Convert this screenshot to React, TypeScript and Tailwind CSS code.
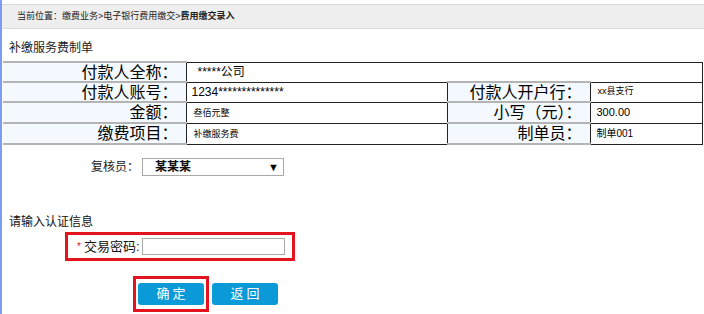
import React from 'react';

const font = { fontFamily: '"Liberation Sans", "Noto Sans CJK SC", sans-serif' };

interface RowProps {
  label: string;
  value: string;
  valueClass?: string;
  label2?: string;
  value2?: string;
  value2Class?: string;
}

const labelTd = 'bg-[#f3f9fe] border-y-2 border-[#b4b4b4] border-r border-r-[#222] text-right pr-[8px] text-[16px] leading-[17px] text-black';
const valueTd = 'border-y border-[#222] border-r border-r-[#222] text-black align-middle';

const InfoRow: React.FC<RowProps> = ({ label, value, valueClass, label2, value2, value2Class }) => (
  <tr className="h-[20px]">
    <td className={`${labelTd} w-[183px]`}>{label}</td>
    {label2 ? (
      <>
        <td className={`${valueTd} w-[261px] ${valueClass ?? ''}`}>{value}</td>
        <td className={`${labelTd} w-[143px]`}>{label2}</td>
        <td className={`${valueTd} ${value2Class ?? ''}`}>{value2}</td>
      </>
    ) : (
      <td colSpan={3} className={`${valueTd} ${valueClass ?? ''}`}>{value}</td>
    )}
  </tr>
);

const App: React.FC = () => {
  return (
    <div className="w-[704px] h-[314px] bg-white border-l-2 border-[#7b9cf0] overflow-hidden" style={font}>
      {/* Breadcrumb */}
      <div className="pt-[4px]">
        <div className="h-[25px] bg-[#eeeeee] border-y border-[#dadada] flex items-center pl-[15px] text-[9px] text-[#222]">
          <span>当前位置：缴费业务&gt;电子银行费用缴交&gt;</span>
          <span className="font-bold">费用缴交录入</span>
        </div>
      </div>

      <div className="pl-[7px] pt-[11px] h-[32px] text-[12px] leading-[16px] text-[#222]">补缴服务费制单</div>

      {/* Info table */}
      <table className="ml-[1px] w-[700px] border-collapse">
        <tbody>
          <InfoRow label="付款人全称：" value="*****公司" valueClass="text-[12px] pl-[11px]" />
          <InfoRow
            label="付款人账号："
            value="1234**************"
            valueClass="text-[12px] pl-[5px]"
            label2="付款人开户行："
            value2="xx县支行"
            value2Class="text-[9px] pl-[7px]"
          />
          <InfoRow
            label="金额："
            value="叁佰元整"
            valueClass="text-[9px] leading-[20px] pl-[7px]"
            label2="小写（元）："
            value2="300.00"
            value2Class="text-[11px] pl-[6px]"
          />
          <InfoRow
            label="缴费项目："
            value="补缴服务费"
            valueClass="text-[9px] leading-[20px] pl-[7px]"
            label2="制单员："
            value2="制单001"
            value2Class="text-[10px] pl-[6px]"
          />
        </tbody>
      </table>

      {/* Reviewer */}
      <div className="mt-[13px] flex items-center h-[18px]">
        <span className="ml-[89px] w-[51px] text-[12px] text-[#222]">复核员：</span>
        <div className="w-[142px] h-[18px] border border-[#a9a9a9] flex items-center justify-between pl-[12px] pr-[4px]">
          <span className="text-[12px] font-semibold text-[#111]">某某某</span>
          <span className="text-[11px] text-black">▼</span>
        </div>
      </div>

      <div className="mt-[39px] pl-[7px] text-[12px] leading-[14px] text-[#111]">请输入认证信息</div>

      {/* Auth */}
      <div className="mt-[3px] ml-[63px] w-[230px] h-[29px] border-[3px] border-[#e3141d] flex items-center">
        <span className="ml-[9px] text-[#e3141d] text-[10px]">*</span>
        <span className="ml-[3px] text-[13px] text-[#111]">交易密码:</span>
        <input type="password" className="ml-[2px] w-[143px] h-[17px] border border-[#a9a9a9] outline-none" />
      </div>

      {/* Buttons */}
      <div className="mt-[15px] flex items-center">
        <div className="ml-[131px] w-[76px] h-[36px] border-[3px] border-[#e3141d] flex items-center justify-center">
          <button className="w-[66px] h-[22px] bg-[#0b9ad8] rounded-[3px] text-white text-[13px] tracking-[3px] pl-[3px]">确定</button>
        </div>
        <button className="ml-[3px] w-[66px] h-[22px] bg-[#0b9ad8] rounded-[3px] text-white text-[13px] tracking-[3px] pl-[3px]">返回</button>
      </div>
    </div>
  );
};

export default App;
